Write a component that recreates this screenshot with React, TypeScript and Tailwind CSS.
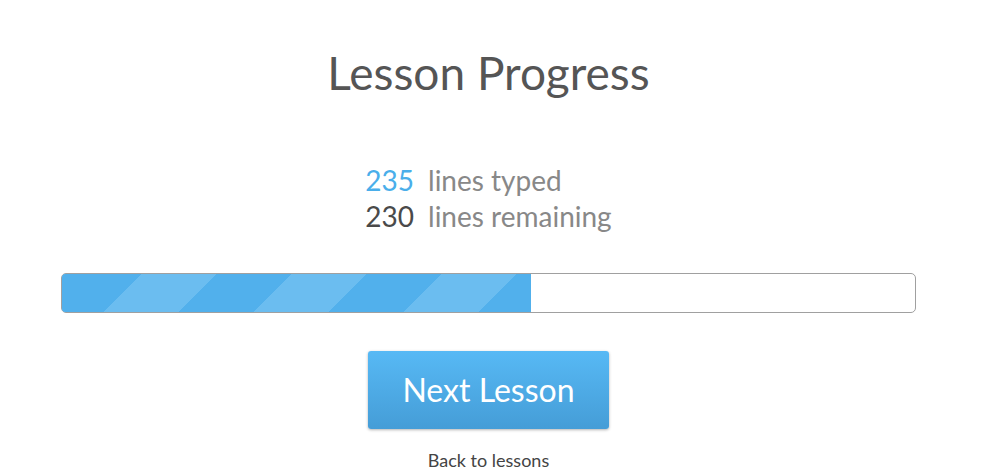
const stats = [
    { value: 235, label: 'lines typed', color: 'text-[#4aaeea]' },
    { value: 230, label: 'lines remaining', color: 'text-[#4a4a4a]' },
];

const ProgressBar = ({ percent }: { percent: number }) => {
    return (
        <div className="h-[40px] w-full overflow-hidden rounded-[5px] border border-[#a0a0a0] bg-white">
            <div
                className="h-full bg-[#51b0ec] bg-[repeating-linear-gradient(-45deg,#51b0ec_0px,#51b0ec_53px,#6bbdf0_53px,#6bbdf0_106px)] bg-[position:22px_0]"
                style={{ width: `${percent}%` }}
            />
        </div>
    );
};

const App = () => {
    return (
        <div className="min-h-screen bg-white font-['Lato',sans-serif]">
            <div className="ml-[61px] flex w-[855px] flex-col items-center pt-[42px]">
                <h1 className="text-[46px] leading-[62px] text-[#555]">Lesson Progress</h1>

                <div className="mt-[59px] flex flex-col gap-[2px] text-[28px] leading-[34px]">
                    {stats.map((s) => (
                        <div key={s.label} className="flex gap-[14px]">
                            <span className={s.color}>{s.value}</span>
                            <span className="text-[#888]">{s.label}</span>
                        </div>
                    ))}
                </div>

                <div className="mt-[40px] w-full">
                    <ProgressBar percent={55} />
                </div>

                <button className="mt-[38px] h-[78px] w-[241px] rounded-[3px] bg-gradient-to-b from-[#57b9f5] to-[#459dd7] text-[32px] text-white shadow-[0_1px_3px_rgba(0,0,0,0.3)]">
                    Next Lesson
                </button>

                <a href="#" className="mt-[18px] text-[18px] text-[#444]">
                    Back to lessons
                </a>
            </div>
        </div>
    );
};

export default App;
